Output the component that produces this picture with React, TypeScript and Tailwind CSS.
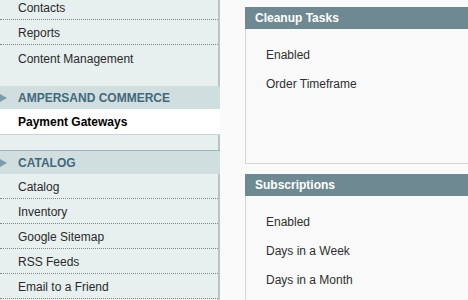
import React from "react";

const font = { fontFamily: '"Liberation Sans", Arial, Helvetica, sans-serif' };

function Row({ label, dotted = true }: { label: string; dotted?: boolean }) {
  return (
    <div
      className={
        "flex items-center pl-[18px] pt-[2px] text-[12px] text-[#2a2a2a] " +
        (dotted ? "h-[25px] border-b border-dotted border-[#7d8889]" : "h-[24px] pt-[3px]")
      }
    >
      {label}
    </div>
  );
}

function Arrow() {
  return (
    <svg width="7" height="8" viewBox="0 0 7 8" className="shrink-0">
      <polygon points="0,0 7,4 0,8" fill="#7f9da8" />
    </svg>
  );
}

function Head({ label, top = false }: { label: string; top?: boolean }) {
  return (
    <div
      className={
        "flex items-center h-[23px] bg-[#d1dedf] " +
        (top ? "h-[24px] border-t border-[#9fb2b6]" : "")
      }
    >
      <Arrow />
      <span className="ml-[11px] pt-[1px] text-[12px] font-bold uppercase text-[#41697c]">{label}</span>
    </div>
  );
}

function Panel({
  title,
  rows,
  bodyHeight,
}: {
  title: string;
  rows: string[];
  bodyHeight: string;
}) {
  return (
    <div className="w-[400px]">
      <div className="flex items-center h-[22px] bg-[#6f8992] pl-[10px] text-[12px] font-bold text-white">
        {title}
      </div>
      <div className={"border border-t-0 border-[#d6d6d6] bg-[#f9f9f9] pt-[11px] pl-[20px] " + bodyHeight}>
        {rows.map((r) => (
          <div key={r} className="flex items-center h-[29px] text-[12px] text-[#2f2f2f]">
            {r}
          </div>
        ))}
      </div>
    </div>
  );
}

export default function App() {
  return (
    <div style={font} className="flex w-[468px] h-[300px] overflow-hidden bg-[#fafafa]">
      <div className="w-[220px] shrink-0 flex flex-col -mt-[5px]">
        <div className="bg-[#e7efef] border-r-2 border-[#b4c6c7]">
          <Row label="Contacts" />
          <Row label="Reports" />
          <Row label="Content Management" dotted={false} />
          <div className="h-[17px]" />
        </div>
        <Head label="Ampersand Commerce" />
        <div className="flex items-center h-[26px] pl-[18px] pt-[1px] bg-white border-b border-[#c9d3d4] text-[12px] font-bold text-black">
          Payment Gateways
        </div>
        <div className="h-[15px] bg-[#e7efef] border-r-2 border-[#b4c6c7]" />
        <Head label="Catalog" top />
        <div className="bg-[#e7efef] border-r-2 border-[#b4c6c7] flex-1">
          <Row label="Catalog" />
          <Row label="Inventory" />
          <Row label="Google Sitemap" />
          <Row label="RSS Feeds" />
          <Row label="Email to a Friend" />
        </div>
      </div>
      <div className="flex-1 pl-[25px] pt-[7px] flex flex-col gap-[10px]">
        <Panel title="Cleanup Tasks" rows={["Enabled", "Order Timeframe"]} bodyHeight="h-[135px]" />
        <Panel
          title="Subscriptions"
          rows={["Enabled", "Days in a Week", "Days in a Month"]}
          bodyHeight="h-[120px]"
        />
      </div>
    </div>
  );
}
